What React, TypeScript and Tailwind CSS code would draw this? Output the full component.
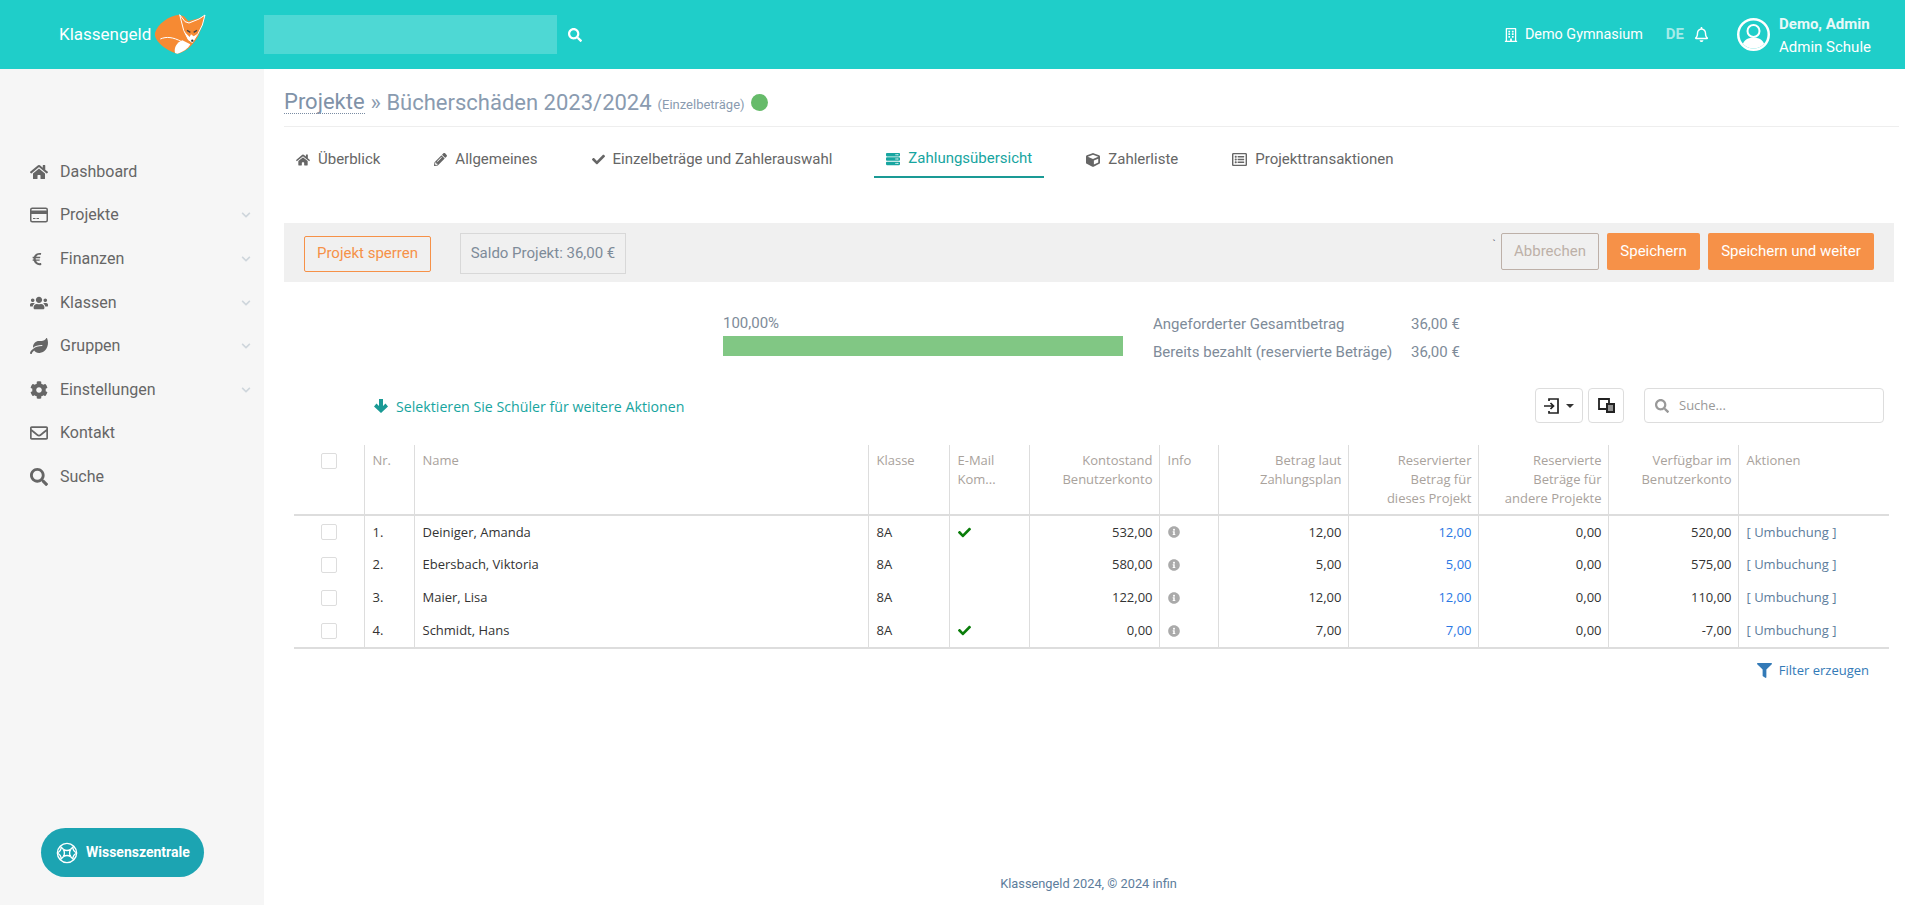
import {
  FaCheck,
  FaChevronDown,
  FaCog,
  FaCube,
  FaEuroSign,
  FaFilter,
  FaHome,
  FaInfoCircle,
  FaLeaf,
  FaPencilAlt,
  FaRegBell,
  FaRegBuilding,
  FaRegEnvelope,
  FaRegListAlt,
  FaSearch,
  FaServer,
  FaUsers,
} from "react-icons/fa";
import type { ComponentType, ReactNode } from "react";

type NavItem = { label: string; icon: ComponentType<{ className?: string }>; chevron?: boolean };

function CardIcon({ className }: { className?: string }) {
  return (
    <svg viewBox="0 0 18 15" className={className}>
      <rect x="0.750" y="0.750" width="16.500" height="13.500" rx="1.500" fill="none" stroke="currentColor" strokeWidth="1.500" />
      <path d="M1 3H17V6.500H1Z" fill="currentColor" />
      <path d="M3 11H5.500M6.500 11H9" stroke="currentColor" strokeWidth="1" />
    </svg>
  );
}

const navItems: NavItem[] = [
  { label: "Dashboard", icon: FaHome },
  { label: "Projekte", icon: CardIcon, chevron: true },
  { label: "Finanzen", icon: FaEuroSign, chevron: true },
  { label: "Klassen", icon: FaUsers, chevron: true },
  { label: "Gruppen", icon: FaLeaf, chevron: true },
  { label: "Einstellungen", icon: FaCog, chevron: true },
  { label: "Kontakt", icon: FaRegEnvelope },
  { label: "Suche", icon: FaSearch },
];

const rows = [
  { nr: "1.", name: "Deiniger, Amanda", mail: true, konto: "532,00", plan: "12,00", res: "12,00", other: "0,00", avail: "520,00" },
  { nr: "2.", name: "Ebersbach, Viktoria", mail: false, konto: "580,00", plan: "5,00", res: "5,00", other: "0,00", avail: "575,00" },
  { nr: "3.", name: "Maier, Lisa", mail: false, konto: "122,00", plan: "12,00", res: "12,00", other: "0,00", avail: "110,00" },
  { nr: "4.", name: "Schmidt, Hans", mail: true, konto: "0,00", plan: "7,00", res: "7,00", other: "0,00", avail: "-7,00" },
];

function FoxLogo() {
  return (
    <svg viewBox="0 0 180 150" className="h-[50px] w-[60px]">
      <path d="M90 17C60 20 25 45 18 72C14 95 50 125 85 134C110 130 135 105 148 80C155 65 165 35 168 18L150 28L118 36L105 22Z" fill="#f68a33" />
      <path d="M92 17L108 38L120 42L150 30L168 18L160 48L146 76L130 100L118 92L104 64Z" fill="#f68a33" stroke="#fff" strokeWidth="3" />
      <path d="M106 68L122 84L126 76L134 82L146 74L130 101L118 93Z" fill="#fff" />
      <path d="M78 132C74 116 84 100 100 94L124 106C118 118 102 130 85 134Z" fill="#fff" />
      <path d="M34 90C52 82 72 84 98 98" fill="none" stroke="#fff" strokeWidth="3" />
      <path d="M114 64L124 70M144 64L134 70" stroke="#444" strokeWidth="4" />
      <circle cx="130" cy="95" r="3.500" fill="#333" />
    </svg>
  );
}

function KnowledgeIcon() {
  return (
    <svg viewBox="0 0 24 24" fill="none" stroke="currentColor" strokeWidth="1.500" className="size-[22px]">
      <circle cx="12" cy="12" r="10.500" />
      <path d="M8 8C10.500 9.500 13.500 9.500 16 8C14.500 10.500 14.500 13.500 16 16C13.500 14.500 10.500 14.500 8 16C9.500 13.500 9.500 10.500 8 8Z" />
      <path d="M8 8L4.500 4.500M16 8L19.500 4.500M8 16L4.500 19.500M16 16L19.500 19.500" />
      <path d="M1.500 12C4.500 10.500 5.500 9 5.800 5.500M22.500 12C19.500 10.500 18.500 9 18.200 5.500M1.500 12C4.500 13.500 5.500 15 5.800 18.500M22.500 12C19.500 13.500 18.500 15 18.200 18.500" />
    </svg>
  );
}

function AvatarIcon() {
  return (
    <svg viewBox="0 0 33 33" className="size-[33px]">
      <defs>
        <clipPath id="avatar-clip">
          <circle cx="16.500" cy="16.500" r="14" />
        </clipPath>
      </defs>
      <circle cx="16.500" cy="16.500" r="15.250" fill="none" stroke="#fff" strokeWidth="2.500" />
      <circle cx="16.500" cy="13" r="6" fill="none" stroke="#fff" strokeWidth="2" />
      <path d="M5 31C5 23 10 19.500 16.500 19.500C23 19.500 28 23 28 31Z" fill="#fff" clipPath="url(#avatar-clip)" />
    </svg>
  );
}

function ImportIcon() {
  return (
    <svg viewBox="0 0 16 16" fill="none" stroke="#222" strokeWidth="1.700" className="size-[16px]">
      <path d="M5 3V1H14V15H5V13" />
      <path d="M0 8H9M6.500 5L9.500 8L6.500 11" />
    </svg>
  );
}

function ColumnsIcon() {
  return (
    <svg viewBox="0 0 17 15" className="h-[15px] w-[17px]">
      <path d="M1 1H11V11H1Z" fill="none" stroke="#222" strokeWidth="1.800" />
      <path d="M8 5H17V15H8Z" fill="#222" />
      <path d="M10 8H15M10 10H15M10 12H15" stroke="#fff" strokeWidth="1" />
    </svg>
  );
}

function ArrowDownIcon() {
  return (
    <svg viewBox="0 0 14 14" className="size-[14px]">
      <path d="M5 0H9V7L11.500 4.500L14 7.500L7 14L0 7.500L2.500 4.500L5 7Z" fill="#1a9a95" />
    </svg>
  );
}

function Tab({ icon, label, active }: { icon: ReactNode; label: string; active?: boolean }) {
  return (
    <div
      className={
        active
          ? "flex h-[38px] items-center gap-[8px] border-b-2 border-[#1a9a95] px-3 pt-[1px] text-[#17a5a0]"
          : "flex h-[38px] items-center gap-[8px] px-3 pt-[1px] text-[#666]"
      }
    >
      {icon}
      <span>{label}</span>
    </div>
  );
}

function Checkbox() {
  return <span className="ml-[19px] block size-4 rounded-[2px] border border-[#ddd] bg-white" />;
}

export default function App() {
  return (
    <div className="flex min-h-screen flex-col bg-white font-['Roboto',sans-serif]">
      <header className="flex h-[69px] items-center bg-[#1fcec9] text-white">
        <div className="flex w-[264px] items-center pl-[59px]">
          <span className="text-[17px] leading-none">Klassengeld</span>
          <span className="mt-[-2px] ml-[-2px]">
            <FoxLogo />
          </span>
        </div>
        <div className="h-[39px] w-[293px] bg-[#4ed8d4]" />
        <FaSearch className="ml-[11px] size-[14px]" />
        <div className="ml-auto flex items-center text-[15px]">
          <FaRegBuilding className="size-[14px]" />
          <span className="ml-[7px] text-[14.4px]">Demo Gymnasium</span>
          <span className="ml-[23px] font-bold text-[#a5ebe8]">DE</span>
          <FaRegBell className="ml-[10px] size-[15px]" />
          <span className="ml-[28px]">
            <AvatarIcon />
          </span>
          <div className="mr-[34px] ml-[9px] pt-[2px] leading-[23px]">
            <div className="font-bold text-[#e9f9f8]">Demo, Admin</div>
            <div>Admin Schule</div>
          </div>
        </div>
      </header>

      <div className="flex flex-1">
        <aside className="flex w-[264px] shrink-0 flex-col bg-[#f6f6f6] pt-[81px] pb-[28px] text-[16px] text-[#666]">
          <nav>
            {navItems.map((item) => (
              <div key={item.label} className="flex h-[43.6px] items-center pr-[7px] pl-[30px]">
                <span className="flex w-[30px] items-center">
                  <item.icon className={item.icon === FaEuroSign ? "size-[14px]" : "size-[18px]"} />
                </span>
                <span>{item.label}</span>
                {item.chevron ? <FaChevronDown className="mr-[6px] ml-auto size-[10px] text-[#cfd6dc]" /> : null}
              </div>
            ))}
          </nav>
          <button
            type="button"
            className="mt-auto ml-[41px] flex h-[49px] w-[163px] items-center gap-[8px] rounded-full bg-[#1ca4b2] pl-[15px] text-[14px] font-bold text-white"
          >
            <KnowledgeIcon />
            <span>Wissenszentrale</span>
          </button>
        </aside>

        <main className="flex min-w-0 flex-1 flex-col pl-[20px]">
          <div className="mr-[6px] flex h-[58px] items-center border-b border-[#eeeeee] pt-[9px] text-[#8a9bb0]">
            <span className="border-b border-dotted border-[#7a8ca3] text-[22px] leading-[23px] text-[#7f92a8]">Projekte</span>
            <span className="ml-[6px] text-[22px]">» Bücherschäden 2023/2024</span>
            <span className="ml-[6px] pt-[5px] text-[13px]">(Einzelbeträge)</span>
            <span className="ml-[6px] size-[17px] rounded-full bg-[#66bb6a]" />
          </div>

          <div className="mt-[13px] flex gap-[30px] text-[15px]">
            <Tab icon={<FaHome className="size-[14px]" />} label="Überblick" />
            <Tab icon={<FaPencilAlt className="size-[13px]" />} label="Allgemeines" />
            <Tab icon={<FaCheck className="size-[13px]" />} label="Einzelbeträge und Zahlerauswahl" />
            <Tab icon={<FaServer className="size-[14px]" />} label="Zahlungsübersicht" active />
            <Tab icon={<FaCube className="size-[14px]" />} label="Zahlerliste" />
            <Tab icon={<FaRegListAlt className="size-[15px]" />} label="Projekttransaktionen" />
          </div>

          <div className="mt-[45px] mr-[11px] flex h-[59px] items-center bg-[#f0f0f0] pr-[20px] pl-[20px] text-[15px]">
            <button type="button" className="mt-[2px] h-[36px] w-[127px] rounded-[2px] border border-[#f69148] text-[#f69148]">
              Projekt sperren
            </button>
            <div className="mt-[2px] ml-[29px] flex h-[41px] w-[166px] items-center justify-center border border-[#d8d8d8] text-[#7e8b99]">
              Saldo Projekt: 36,00 €
            </div>
            <span className="mb-[14px] ml-auto text-[11px] text-[#667]">`</span>
            <button type="button" className="mb-[2px] ml-[5px] h-[37px] w-[98px] rounded-[2px] border border-[#bdb0a8] text-[#bdb0a8]">
              Abbrechen
            </button>
            <button type="button" className="mb-[2px] ml-[8px] h-[37px] w-[93px] rounded-[2px] bg-[#f69148] text-white">
              Speichern
            </button>
            <button type="button" className="mb-[2px] ml-[8px] h-[37px] w-[166px] rounded-[2px] bg-[#f69148] text-white">
              Speichern und weiter
            </button>
          </div>

          <div className="mt-[28px] flex text-[15px] text-[#7e8b99]">
            <div className="ml-[439px] w-[400px]">
              <div className="flex h-[26px] items-center">100,00%</div>
              <div className="h-[20px] w-full bg-[#81c784]" />
            </div>
            <div className="ml-[30px] grid grid-cols-[258px_auto] auto-rows-[28px] items-center">
              <span>Angeforderter Gesamtbetrag</span>
              <span>36,00 €</span>
              <span>Bereits bezahlt (reservierte Beträge)</span>
              <span>36,00 €</span>
            </div>
          </div>

          <div className="mt-[22px] mr-[21px] flex h-[35px] items-center font-['Open_Sans',sans-serif]">
            <div className="ml-[90px] flex items-center gap-[8px] pt-[2px] text-[14.2px] text-[#17a5a0]">
              <ArrowDownIcon />
              <span>Selektieren Sie Schüler für weitere Aktionen</span>
            </div>
            <div className="ml-auto flex h-full w-[48px] items-center justify-center gap-[6px] rounded-[4px] border border-[#ddd]">
              <ImportIcon />
              <span className="h-0 w-0 border-x-[4px] border-t-[4px] border-x-transparent border-t-[#333]" />
            </div>
            <div className="ml-[5px] flex h-full w-[36px] items-center justify-center rounded-[4px] border border-[#ddd]">
              <ColumnsIcon />
            </div>
            <div className="ml-[20px] flex h-full w-[240px] items-center rounded-[4px] border border-[#ddd] pl-[10px] text-[13px] text-[#999]">
              <FaSearch className="size-[14px] text-[#999]" />
              <span className="ml-[10px]">Suche...</span>
            </div>
          </div>

          <table className="mt-[22px] ml-[10px] w-[1595px] table-fixed border-collapse font-['Open_Sans',sans-serif] text-[13px] leading-[19px]">
            <colgroup>
              <col className="w-[70px]" />
              <col className="w-[50px]" />
              <col className="w-[454px]" />
              <col className="w-[81px]" />
              <col className="w-[80px]" />
              <col className="w-[130px]" />
              <col className="w-[59px]" />
              <col className="w-[130px]" />
              <col className="w-[130px]" />
              <col className="w-[130px]" />
              <col className="w-[130px]" />
              <col className="w-[151px]" />
            </colgroup>
            <thead>
              <tr className="h-[70px] border-b-2 border-[#ddd] align-top text-[#a9a29c] [&>th]:pt-[6px] [&>th]:pr-[6px] [&>th]:pl-[8px] [&>th]:font-normal">
                <th className="border-r border-[#ddd]">
                  <div className="pt-[2px]">
                    <Checkbox />
                  </div>
                </th>
                <th className="border-r border-[#ddd] text-left">Nr.</th>
                <th className="border-r border-[#ddd] text-left">Name</th>
                <th className="border-r border-[#ddd] text-left">Klasse</th>
                <th className="border-r border-[#ddd] text-left">
                  E-Mail
                  <br />
                  Kom...
                </th>
                <th className="border-r border-[#ddd] text-right">
                  Kontostand Benutzerkonto
                </th>
                <th className="border-r border-[#ddd] text-left">Info</th>
                <th className="border-r border-[#ddd] text-right">
                  Betrag laut
                  <br />
                  Zahlungsplan
                </th>
                <th className="border-r border-[#ddd] text-right">
                  Reservierter
                  <br />
                  Betrag für
                  <br />
                  dieses Projekt
                </th>
                <th className="border-r border-[#ddd] text-right">
                  Reservierte
                  <br />
                  Beträge für
                  <br />
                  andere Projekte
                </th>
                <th className="border-r border-[#ddd] text-right">
                  Verfügbar im
                  <br />
                  Benutzerkonto
                </th>
                <th className="text-left">Aktionen</th>
              </tr>
            </thead>
            <tbody className="border-b-2 border-[#ddd] text-[#333]">
              {rows.map((row) => (
                <tr key={row.nr} className="h-[33px] last:h-[34px] [&>td]:pr-[6px] [&>td]:pl-[8px]">
                  <td className="border-r border-[#ddd]">
                    <Checkbox />
                  </td>
                  <td className="border-r border-[#ddd]">{row.nr}</td>
                  <td className="border-r border-[#ddd]">{row.name}</td>
                  <td className="border-r border-[#ddd]">8A</td>
                  <td className="border-r border-[#ddd]">
                    {row.mail ? <FaCheck className="size-[13px] text-[#0a7d0a]" /> : null}
                  </td>
                  <td className="border-r border-[#ddd] text-right">{row.konto}</td>
                  <td className="border-r border-[#ddd]">
                    <FaInfoCircle className="size-[12px] text-[#aaa]" />
                  </td>
                  <td className="border-r border-[#ddd] text-right">{row.plan}</td>
                  <td className="border-r border-[#ddd] text-right text-[#2b78e4]">{row.res}</td>
                  <td className="border-r border-[#ddd] text-right">{row.other}</td>
                  <td className="border-r border-[#ddd] text-right">{row.avail}</td>
                  <td className="text-[#5d7d9c]">[ Umbuchung ]</td>
                </tr>
              ))}
            </tbody>
          </table>

          <div className="mt-[12px] mr-[36px] flex items-center justify-end gap-[7px] font-['Open_Sans',sans-serif] text-[13px] text-[#337ab7]">
            <FaFilter className="size-[15px]" />
            <span>Filter erzeugen</span>
          </div>

          <footer className="mt-auto pr-[12px] pb-[12px] text-center text-[12.8px] text-[#5d7d9c]">Klassengeld 2024, © 2024 infin</footer>
        </main>
      </div>
    </div>
  );
}
